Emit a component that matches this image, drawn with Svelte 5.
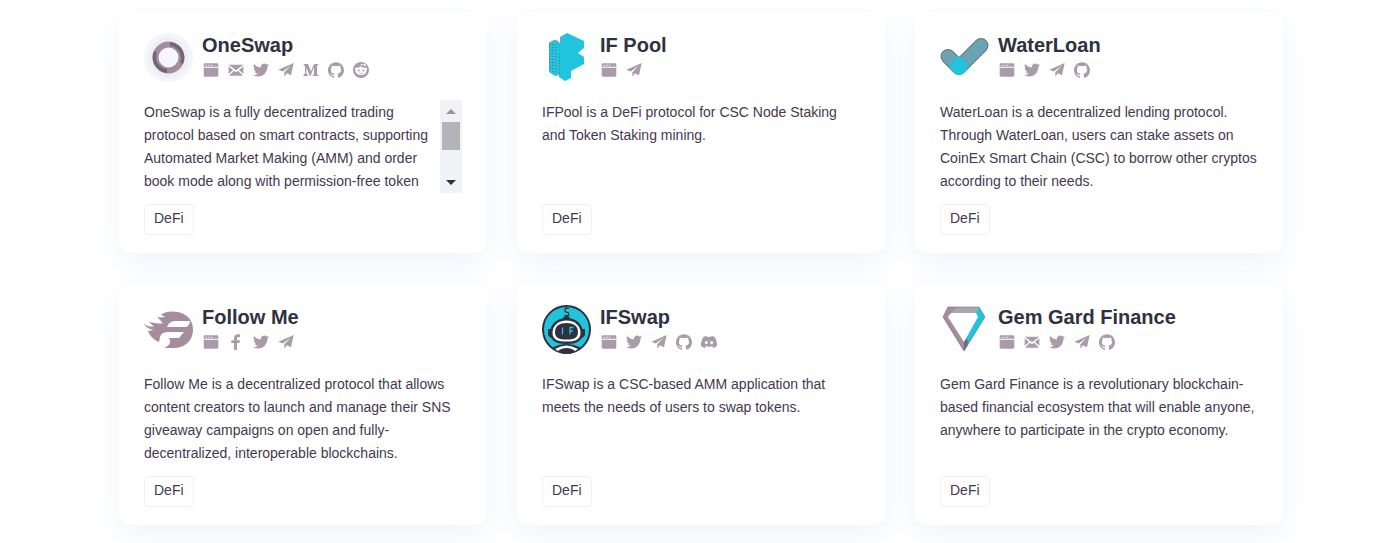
<script>
  const projects = [
    {
      name: 'OneSwap',
      logo: 'oneswap',
      links: ['site', 'mail', 'twitter', 'telegram', 'medium', 'github', 'reddit'],
      text: 'OneSwap is a fully decentralized trading protocol based on smart contracts, supporting Automated Market Making (AMM) and order book mode along with permission-free token',
      scroll: true
    },
    {
      name: 'IF Pool',
      logo: 'ifpool',
      links: ['site', 'telegram'],
      text: 'IFPool is a DeFi protocol for CSC Node Staking and Token Staking mining.'
    },
    {
      name: 'WaterLoan',
      logo: 'waterloan',
      links: ['site', 'twitter', 'telegram', 'github'],
      text: 'WaterLoan is a decentralized lending protocol. Through WaterLoan, users can stake assets on CoinEx Smart Chain (CSC) to borrow other cryptos according to their needs.'
    },
    {
      name: 'Follow Me',
      logo: 'followme',
      links: ['site', 'facebook', 'twitter', 'telegram'],
      text: 'Follow Me is a decentralized protocol that allows content creators to launch and manage their SNS giveaway campaigns on open and fully-decentralized, interoperable blockchains.'
    },
    {
      name: 'IFSwap',
      logo: 'ifswap',
      links: ['site', 'twitter', 'telegram', 'github', 'discord'],
      text: 'IFSwap is a CSC-based AMM application that meets the needs of users to swap tokens.'
    },
    {
      name: 'Gem Gard Finance',
      logo: 'gemgard',
      links: ['site', 'mail', 'twitter', 'telegram', 'github'],
      text: 'Gem Gard Finance is a revolutionary blockchain-based financial ecosystem that will enable anyone, anywhere to participate in the crypto economy.'
    }
  ];

  // Glyphs on a 24-unit grid
  const icons = {
    site: 'M3 2h18a2 2 0 0 1 2 2v3H1V4a2 2 0 0 1 2-2zm1 2v1.500h2V4zm4 0v1.500h2V4zm4 0v1.500h2V4zM1 8.500h22V20a2 2 0 0 1-2 2H3a2 2 0 0 1-2-2z',
    mail: 'M1 4h22L12 12.500zM1 6.500 7.500 12 1 18zM23 6.500V18l-6.500-6zM9 13.200l3 2.300 3-2.300 7.500 7.300h-21z',
    twitter: 'M23.953 4.570a10 10 0 0 1-2.825.775 4.958 4.958 0 0 0 2.163-2.723c-.951.555-2.005.959-3.127 1.184a4.920 4.920 0 0 0-8.384 4.482C7.690 8.095 4.067 6.130 1.640 3.162a4.822 4.822 0 0 0-.666 2.475c0 1.710.870 3.213 2.188 4.096a4.904 4.904 0 0 1-2.228-.616v.060a4.923 4.923 0 0 0 3.946 4.827 4.996 4.996 0 0 1-2.212.085 4.936 4.936 0 0 0 4.604 3.417 9.867 9.867 0 0 1-6.102 2.105c-.390 0-.779-.023-1.170-.067a13.995 13.995 0 0 0 7.557 2.209c9.053 0 13.998-7.496 13.998-13.985 0-.210 0-.420-.015-.630a9.935 9.935 0 0 0 2.460-2.548z',
    telegram: 'M23.500 1.500.500 11.500l6.500 2.800L19 5.500l-9.500 10V22l3.700-5 6.300 3z',
    medium: 'M1 3h6.500L12 14l4.500-11H23v1.500l-2 1.300v12.400l2 1.300V21h-8.500v-1.500l2-1.300V8L11.200 21h-1L5 8.500v8.700l2.500 2.500V21H.500v-1.300L3 17.200V6L1 4.500z',
    github: 'M12 .297c-6.630 0-12 5.373-12 12 0 5.303 3.438 9.800 8.205 11.385.600.113.820-.258.820-.577 0-.285-.010-1.040-.015-2.040-3.338.724-4.042-1.610-4.042-1.610C4.422 18.070 3.633 17.700 3.633 17.700c-1.087-.744.084-.729.084-.729 1.205.084 1.838 1.236 1.838 1.236 1.070 1.835 2.809 1.305 3.495.998.108-.776.417-1.305.760-1.605-2.665-.300-5.466-1.332-5.466-5.930 0-1.310.465-2.380 1.235-3.220-.135-.303-.540-1.523.105-3.176 0 0 1.005-.322 3.300 1.230.960-.267 1.980-.399 3-.405 1.020.006 2.040.138 3 .405 2.280-1.552 3.285-1.230 3.285-1.230.645 1.653.240 2.873.120 3.176.765.840 1.230 1.910 1.230 3.220 0 4.610-2.805 5.625-5.475 5.920.420.360.810 1.096.810 2.220 0 1.606-.015 2.896-.015 3.286 0 .315.210.690.825.570C20.565 22.092 24 17.592 24 12.297c0-6.627-5.373-12-12-12',
    reddit: 'M12 0a12 12 0 1 0 0 24 12 12 0 0 0 0-24zM12 7.500 13 4l3 .6a1.600 1.600 0 1 0 .2-1L12.300 2.800 11 7.500c-2 .1-3.800.6-5 1.500A2 2 0 1 0 3.800 12.300c-.6 4 3.200 7.200 8.200 7.200s8.800-3.200 8.200-7.200A2 2 0 1 0 18 9c-1.500-1-3.500-1.500-6-1.500zM8.500 11.300a1.500 1.500 0 1 1 0 3 1.500 1.500 0 0 1 0-3zm7 0a1.500 1.500 0 1 1 0 3 1.500 1.500 0 0 1 0-3zM8 15.800c2.400 1.400 5.600 1.400 8 0-1.500 2.600-6.500 2.600-8 0z',
    facebook: 'M9 24V13.500H5V9.500h4V6.500C9 2.500 11.300.500 14.900.500c1.600 0 3.100.2 3.100.2v3.700h-2c-1.900 0-2.600 1.100-2.600 2.400v2.700H18l-.8 4h-3.800V24z',
    discord: 'M20.300 4.400A19.800 19.800 0 0 0 15.400 3l-.8 1.500a18 18 0 0 0-5.300 0L8.500 3a19.700 19.700 0 0 0-4.900 1.400C.500 9 -.300 13.600.100 18.100a19.900 19.900 0 0 0 6 3l1.300-2-1.900-1 .5-.4c3.900 1.800 8.200 1.800 12.100 0l.4.4-1.900 1 1.300 2a19.800 19.800 0 0 0 6-3c.5-5.200-.8-9.700-3.600-13.700zM8 15.300c-1.200 0-2.200-1.100-2.200-2.400S6.800 10.500 8 10.500s2.200 1.100 2.200 2.400-1 2.400-2.200 2.400zm8 0c-1.200 0-2.200-1.100-2.200-2.400s1-2.400 2.200-2.400 2.200 1.100 2.200 2.400-1 2.400-2.200 2.400z'
  };

  function step(event, direction) {
    const pane = event.currentTarget.closest('.about').querySelector('.text');
    pane.scrollBy({ top: direction * 23 });
  }
</script>

<main>
  {#each projects as project}
    <article>
      <header>
        <svg class="logo" viewBox="0 0 49 49" aria-hidden="true">
          {#if project.logo === 'oneswap'}
            <circle cx="24.500" cy="24.500" r="24.500" fill="#f4f5fa" />
            <circle cx="24.500" cy="24.500" r="20" fill="#eeeff6" />
            <circle cx="24.500" cy="24.500" r="13" fill="#f6f7fc" stroke="#a58c9f" stroke-width="6" />
            <path d="M26 9a15.700 15.700 0 0 1 13 22l-3-1.500A12 12 0 0 0 26 13zM23 40A15.700 15.700 0 0 1 10 18l3 1.500A12 12 0 0 0 23 36z" fill="#716677" />
          {:else if project.logo === 'ifpool'}
            <path d="M7 10l6-3 5 3V4l7-4 17 8v7l-6 5 6 4v7l-13 7v7l-6 3-6-4v-2l-4 1-6-4z" fill="#20c4dc" />
            <path d="M7.500 11v27M10.500 11v29M13.500 14v27M17.500 21v21" stroke="#746879" stroke-dasharray="1 2" />
            <path d="M18.500 4v6M7 10l6-3 4 2" fill="none" stroke="#a58c9f" />
          {:else if project.logo === 'waterloan'}
            <path d="M8 23.500l11 11L41 12.500" fill="none" stroke="#6e6f80" stroke-width="15" stroke-linecap="round" stroke-linejoin="round" />
            <path d="M8 23.500l11 11L41 12.500" fill="none" stroke="#6aa3b1" stroke-width="13" stroke-linecap="round" stroke-linejoin="round" />
            <path d="M19 23l8 7q2 5-1 8-7 8-14 0-3-3-1-8z" fill="#20c4dc" />
          {:else if project.logo === 'followme'}
            <path d="M0 19l5 2.500h5L5 17l9 1.500h5l-6-7q4 2 8 0-4-2-5-1C22 6 28 6 34 7c10 2 15 9 15 18 0 11-9 18-19 18h-10q9-4 5-10h10l5-6H25q-8 0-9 5l-1 5C8 34 5 29 4 26l6-1Q3 24 0 19zm23 3h18q4 0 5-6H31q-6 0-8 6z" fill="#a58c9f" />
          {:else if project.logo === 'ifswap'}
            <circle cx="24.500" cy="24.500" r="23.500" fill="#20c4dc" stroke="#30313f" stroke-width="2" />
            <path d="M27 3.500h-4v3l3.500 1.500v2.500h-4M24.500 1v3m0 6v3" fill="none" stroke="#30313f" stroke-width="1.200" />
            <path d="M21 14q0-3 3.500-3t3.500 3zM6 24h4v9q-4-1-4-4zm37 0h-4v9q4-1 4-4z" fill="#30313f" />
            <path d="M24.500 13C14 13 8 20 8 28s7 11 16.500 11S41 36 41 28s-6-15-16.500-15z" fill="#30313f" />
            <path d="M24.500 15.500C16 15.500 10.500 21 10.500 28s6 8.500 14 8.500 14-1.500 14-8.500-5.500-12.500-14-12.500z" fill="#fff" />
            <path d="M24.500 18C17.500 18 13 21 13 27s4 7.500 11.500 7.500S36 33 36 27s-4.500-9-11.500-9z" fill="#30313f" />
            <path d="M20.500 22.500v7M28 29.500v-7h3.500M28 26h3" fill="none" stroke="#20c4dc" stroke-width="1.300" />
            <path d="M10 43q14.500-8 29 0-14 12-29 0z" fill="#30313f" />
            <path d="M13 44q11.500-7 23 0l-3 2q-8.500-4-17 0z" fill="#fff" />
            <path d="M17 45q7.500-4 15 0v2q-7.500 2-15 0z" fill="#30313f" />
          {:else}
            <path d="M8 2h31l-2 6H11z" fill="#aaa6b0" />
            <path d="M17 2H8L3 12l4 1 4-5z" fill="#a58c9f" />
            <path d="M39 2l6 10-21 34v-9L38 12l-2-4z" fill="#20c4dc" />
            <path d="M3 12h5l16 25v9z" fill="#a58c9f" />
            <path d="M24 46v-9l3-4 1 6z" fill="#746879" />
            <path d="M8 2h31l6 10-21 34L3 12z" fill="none" stroke="#746879" stroke-opacity=".6" />
          {/if}
        </svg>
        <div class="heading">
          <h2>{project.name}</h2>
          <nav aria-label={project.name}>
            {#each project.links as link}
              <a href={'#' + link} aria-label={link}>
                <svg viewBox="0 0 24 24" aria-hidden="true"><path d={icons[link]} fill-rule="evenodd" /></svg>
              </a>
            {/each}
          </nav>
        </div>
      </header>
      <div class="about">
        <p class="text">{project.text}</p>
        {#if project.scroll}
          <div class="scrollbar">
            <button type="button" aria-label="Scroll up" onclick={(e) => step(e, -1)}>
              <svg viewBox="0 0 10 5" aria-hidden="true"><path d="M0 5 5 0l5 5z" fill="#a58c9f" /></svg>
            </button>
            <div class="thumb"></div>
            <button class="down" type="button" aria-label="Scroll down" onclick={(e) => step(e, 1)}>
              <svg viewBox="0 0 10 5" aria-hidden="true"><path d="M0 0h10L5 5z" fill="#30313f" /></svg>
            </button>
          </div>
        {/if}
      </div>
      <span class="tag">DeFi</span>
    </article>
  {/each}
</main>

<style>
  :global(body) {
    margin: 0;
    background: #fff;
  }

  main {
    display: grid;
    grid-template-columns: repeat(3, 1fr);
    gap: 31px 30px;
    padding: 12px 117px 18px 119px;
    font-family: 'Liberation Sans', Arial, sans-serif;
    color: #30313f;
  }

  article {
    box-sizing: border-box;
    padding: 21px 25px 18px;
    border-radius: 12px;
    background: #fff;
    box-shadow: 0 10px 30px rgba(215, 224, 244, 0.4);
  }

  header {
    display: flex;
    gap: 9px;
  }

  .logo {
    flex: none;
    width: 49px;
    height: 49px;
  }

  h2 {
    margin: 0 0 5px;
    font-size: 20px;
    line-height: 24px;
  }

  nav {
    display: flex;
    gap: 9px;
    padding-left: 1px;
  }

  nav a {
    display: block;
    width: 16px;
    height: 16px;
  }

  nav svg {
    display: block;
    width: 16px;
    height: 16px;
    fill: #a99ba9;
  }

  .about {
    display: flex;
    gap: 10px;
    height: 93px;
    margin: 18px 0 11px;
  }

  .text {
    flex: 1;
    margin: 0;
    padding-top: 1px;
    font-size: 14px;
    line-height: 23px;
    color: #45384f;
    overflow-y: auto;
    scrollbar-width: none;
  }

  .scrollbar {
    display: flex;
    flex-direction: column;
    width: 18px;
    padding: 0 2px;
    background: #f1f2f8;
  }

  .scrollbar button {
    display: flex;
    align-items: center;
    justify-content: center;
    height: 22px;
    padding: 0;
    border: 0;
    background: none;
  }

  .scrollbar button svg {
    width: 10px;
    height: 5px;
  }

  .thumb {
    height: 28px;
    background: #b5b3ba;
  }

  .scrollbar .down {
    margin-top: auto;
  }

  .tag {
    display: inline-block;
    padding: 0 9px 2px;
    border: 1px solid #f0f1f8;
    border-radius: 4px;
    font-size: 14px;
    line-height: 27px;
    color: #45384f;
  }
</style>
